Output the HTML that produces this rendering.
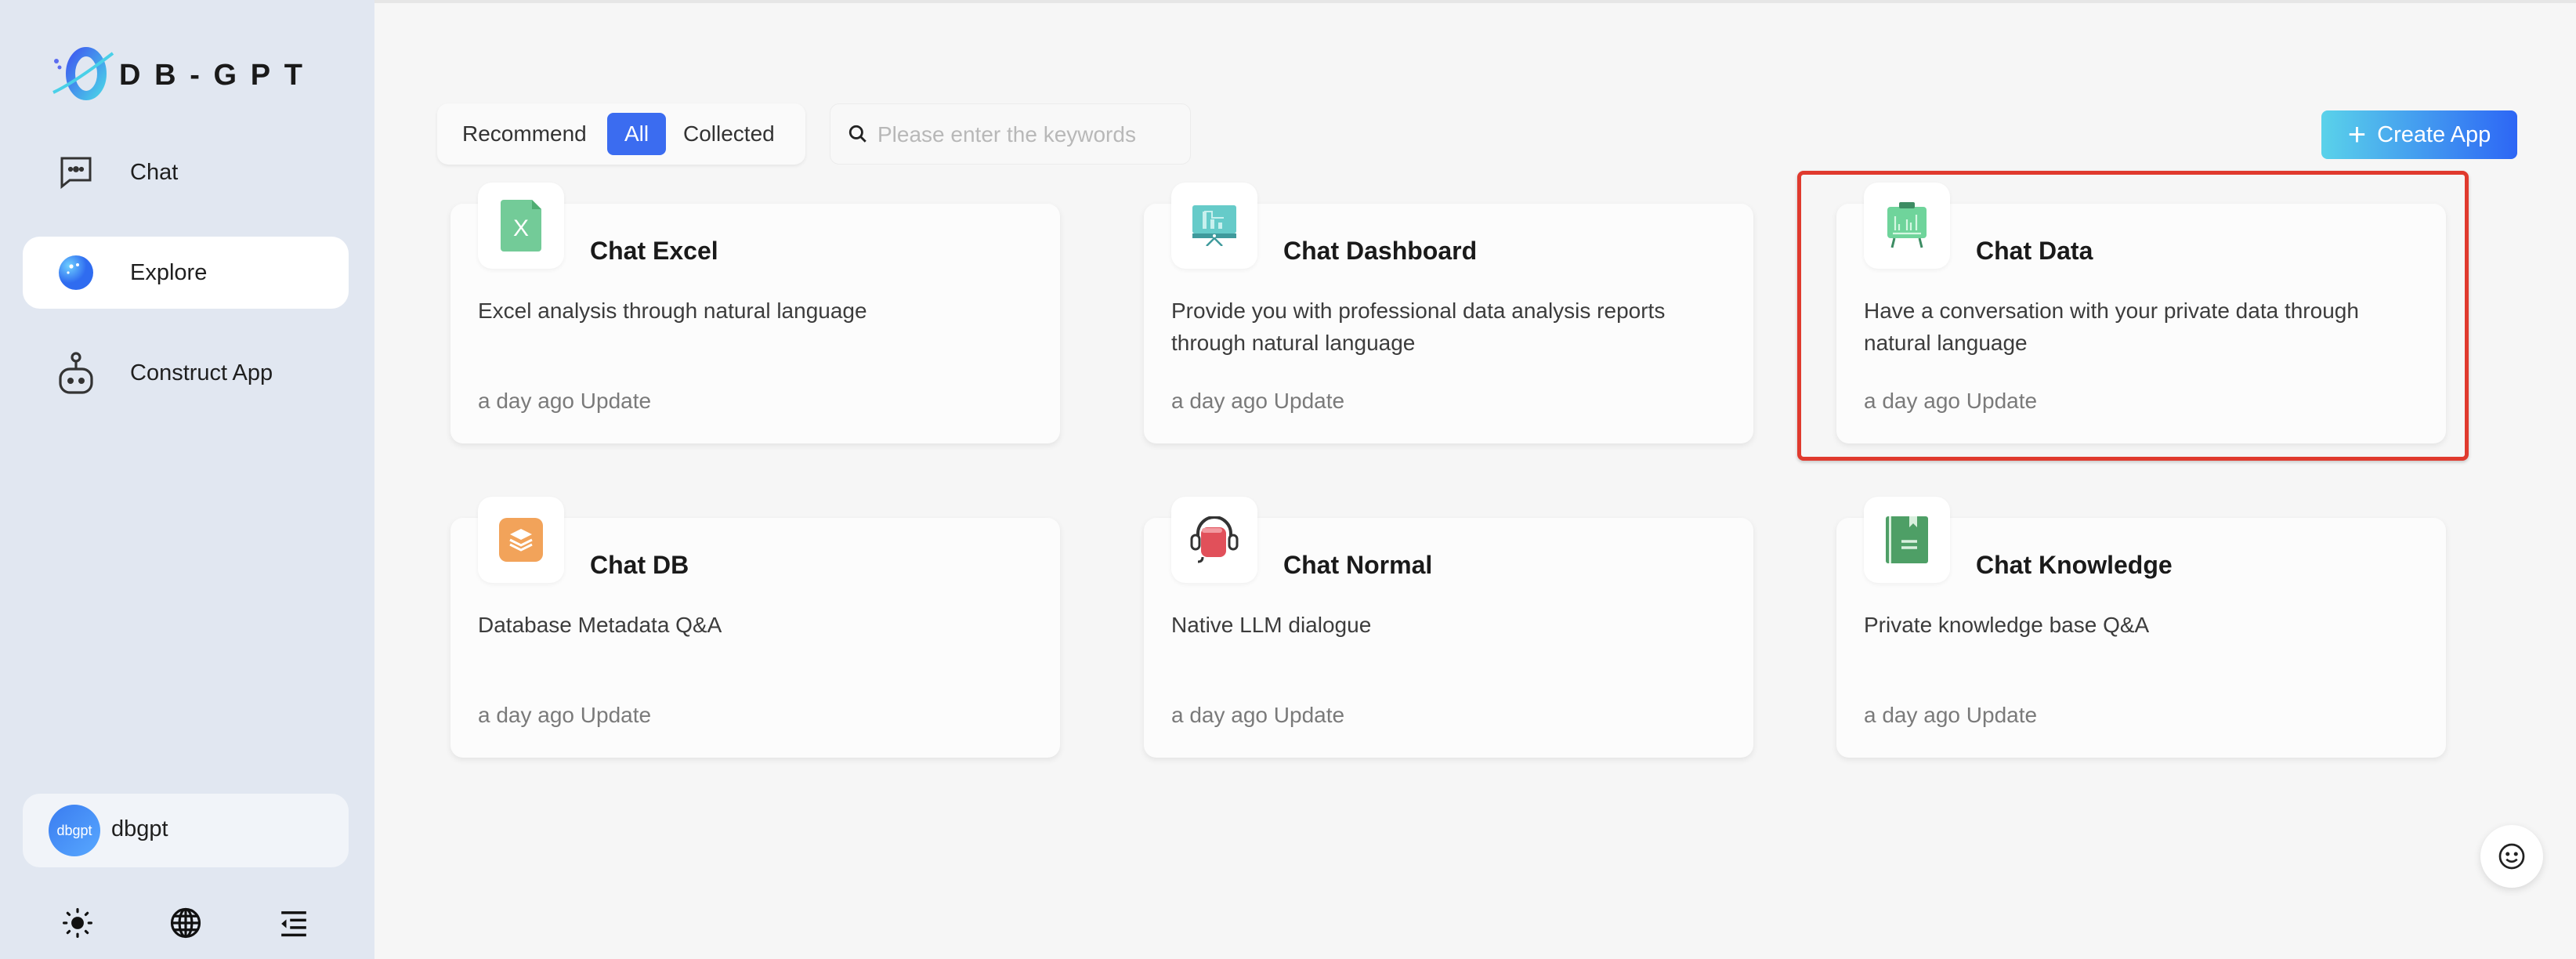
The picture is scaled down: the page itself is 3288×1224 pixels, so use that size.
<!DOCTYPE html>
<html><head><meta charset="utf-8"><style>
*{box-sizing:border-box;margin:0;padding:0}
body{width:3288px;height:1224px;background:#f6f6f6;font-family:"Liberation Sans",sans-serif;position:relative;overflow:hidden;color:#1f1f1f}
.abs{position:absolute}
.side{left:0;top:0;width:478px;height:1224px;background:#e1e7f1}
.topline{left:478px;top:0;width:2810px;height:4px;background:#e6e6e6}
.nav{position:absolute;left:29px;width:416px;height:92px;border-radius:22px;display:flex;align-items:center;font-size:29px;color:#1f1f1f}
.nav svg{margin-left:44px;margin-right:45px}
.card{position:absolute;width:778px;height:306px;background:#fcfcfc;border-radius:16px;box-shadow:0 3px 8px rgba(0,0,0,.08)}
.ib{position:absolute;left:35px;top:-27px;width:110px;height:110px;background:#fff;border-radius:18px;box-shadow:0 2px 6px rgba(0,0,0,.05);display:flex;align-items:center;justify-content:center}
.tt{position:absolute;left:178px;top:42px;font-size:32px;font-weight:bold;color:#1a1a1a}
.ds{position:absolute;left:35px;top:116px;font-size:28px;line-height:41px;color:#3c3c3c;width:700px}
.ft{position:absolute;left:35px;top:236px;font-size:28px;color:#7a7a7a}
</style></head><body>
<div class="abs side"></div>
<div class="abs topline"></div>
<!-- logo -->
<svg class="abs" style="left:64px;top:56px" width="340" height="76" viewBox="0 0 340 76">
<defs><linearGradient id="lg" x1="0" y1="0" x2="1" y2="1"><stop offset="0" stop-color="#3f5cf0"/><stop offset="1" stop-color="#4ad0e8"/></linearGradient></defs>
<ellipse cx="46" cy="38" rx="20" ry="28" fill="none" stroke="url(#lg)" stroke-width="12"/>
<path d="M4 62 Q30 50 80 12" stroke="#4ad0e8" stroke-width="4" fill="none"/>
<circle cx="8" cy="22" r="3" fill="#5b6cf0"/><circle cx="12" cy="30" r="2.5" fill="#5b6cf0"/>
<text x="88" y="52" font-family="Liberation Sans,sans-serif" font-weight="bold" font-size="38" letter-spacing="6" textLength="240" fill="#1a1a1a">DB-GPT</text>
</svg>
<div class="nav" style="top:174px"><svg width="48" height="48" viewBox="0 0 24 24" fill="none" stroke="#333" stroke-width="1.5"><path d="M3 3h18v14H8l-5 4z"/><circle cx="12" cy="10" r="1.2" fill="#333"/><circle cx="8.5" cy="10" r=".8" fill="#333"/><circle cx="15.5" cy="10" r=".8" fill="#333"/></svg>Chat</div>
<div class="nav" style="top:302px;background:#fff"><svg width="48" height="48" viewBox="0 0 24 24"><defs><radialGradient id="rg" cx=".3" cy=".3"><stop offset="0" stop-color="#6fd0ff"/><stop offset="1" stop-color="#2f6cf0"/></radialGradient></defs><circle cx="12" cy="12" r="11" fill="url(#rg)"/><circle cx="9" cy="8" r="1.3" fill="#fff"/><circle cx="13" cy="7" r="1" fill="#fff"/><circle cx="7" cy="12" r=".8" fill="#fff"/></svg>Explore</div>
<div class="nav" style="top:430px"><svg width="48" height="56" viewBox="0 0 24 28" fill="none" stroke="#333" stroke-width="1.6"><circle cx="12" cy="4" r="2.5"/><path d="M12 6.5v5"/><rect x="2" y="11.5" width="20" height="15" rx="6"/><circle cx="8.5" cy="19" r="1.2" fill="#333"/><circle cx="15.5" cy="19" r="1.2" fill="#333"/></svg>Construct App</div>
<!-- user -->
<div class="abs" style="left:29px;top:1013px;width:416px;height:94px;background:#f1f4f9;border-radius:22px"></div>
<div class="abs" style="left:62px;top:1027px;width:66px;height:66px;border-radius:50%;background:linear-gradient(135deg,#3a7cf0,#58a8ff);color:#fff;font-size:18px;display:flex;align-items:center;justify-content:center">dbgpt</div>
<div class="abs" style="left:142px;top:1042px;font-size:29px">dbgpt</div>
<svg class="abs" style="left:80px;top:1159px" width="38" height="38" viewBox="0 0 24 24"><circle cx="12" cy="12" r="5" fill="#111"/><g stroke="#111" stroke-width="2" stroke-linecap="round"><path d="M12 1v2M12 21v2M1 12h2M21 12h2M4 4l1.4 1.4M18.6 18.6L20 20M4 20l1.4-1.4M18.6 5.4L20 4"/></g></svg>
<svg class="abs" style="left:216px;top:1157px" width="42" height="42" viewBox="0 0 24 24" fill="none" stroke="#111" stroke-width="1.8"><circle cx="12" cy="12" r="10"/><ellipse cx="12" cy="12" rx="4.5" ry="10"/><path d="M2 12h20M3.5 7h17M3.5 17h17M12 2v20"/></svg>
<svg class="abs" style="left:356px;top:1160px" width="38" height="38" viewBox="0 0 24 24" fill="#111"><rect x="2" y="2" width="20" height="2.2"/><rect x="9" y="8" width="13" height="2.2"/><rect x="9" y="14" width="13" height="2.2"/><rect x="2" y="20" width="20" height="2.2"/><path d="M2 12l4-3.5v7z"/></svg>
<!-- tabs -->
<div class="abs" style="left:558px;top:132px;width:470px;height:78px;background:#fafafa;border-radius:14px;box-shadow:0 2px 5px rgba(0,0,0,.07)"></div>
<div class="abs" style="left:590px;top:155px;font-size:28px;color:#333">Recommend</div>
<div class="abs" style="left:775px;top:144px;width:75px;height:54px;background:#3b6cf0;border-radius:8px;color:#fff;font-size:28px;display:flex;align-items:center;justify-content:center">All</div>
<div class="abs" style="left:872px;top:155px;font-size:28px;color:#333">Collected</div>
<div class="abs" style="left:1059px;top:132px;width:461px;height:78px;background:#f8f8f8;border-radius:12px;border:1px solid #ececec"></div>
<svg class="abs" style="left:1082px;top:158px" width="26" height="26" viewBox="0 0 24 24" fill="none" stroke="#222" stroke-width="2.6"><circle cx="10" cy="10" r="7"/><path d="M15 15l6 6"/></svg>
<div class="abs" style="left:1120px;top:156px;font-size:28px;color:#b8b8b8">Please enter the keywords</div>
<div class="abs" style="left:2963px;top:141px;width:250px;height:62px;border-radius:8px;background:linear-gradient(90deg,#5ad2ea,#2d66f5);color:#fff;font-size:29px;display:flex;align-items:center;justify-content:center"><span style="font-size:40px;font-weight:300;margin-right:14px;line-height:1">+</span>Create App</div>
<!-- red box -->
<div class="abs" style="left:2294px;top:218px;width:857px;height:370px;border:5px solid #e03a2e;border-radius:8px;box-shadow:0 2px 4px rgba(0,0,0,.2)"></div>
<!-- cards -->
<div class="card" style="left:575px;top:260px"><div class="ib"><svg width="52" height="66" viewBox="0 0 52 66"><path d="M4 0h36l12 12v50a4 4 0 0 1-4 4H4a4 4 0 0 1-4-4V4a4 4 0 0 1 4-4z" fill="#73cb98"/><path d="M40 0l12 12H40z" fill="#4fae72"/><text x="26" y="46" text-anchor="middle" font-size="30" fill="#fff" font-family="Liberation Sans">X</text></svg></div><div class="tt">Chat Excel</div><div class="ds">Excel analysis through natural language</div><div class="ft">a day ago Update</div></div>
<div class="card" style="left:1460px;top:260px"><div class="ib"><svg width="56" height="52" viewBox="0 0 56 52"><rect x="0" y="0" width="56" height="36" rx="3" fill="#66cbc9"/><rect x="0" y="36" width="56" height="6" fill="#3f9a9c"/><rect x="13" y="8" width="5" height="22" fill="#c8f0ee"/><rect x="23" y="18" width="5" height="12" fill="#c8f0ee"/><rect x="33" y="22" width="5" height="8" fill="#c8f0ee"/><path d="M15 8h10v8h15" stroke="#c8f0ee" stroke-width="2" fill="none"/><path d="M28 42l-10 10M28 42l10 10" stroke="#3f9a9c" stroke-width="2.5"/><circle cx="28" cy="39" r="2" fill="#fff"/></svg></div><div class="tt">Chat Dashboard</div><div class="ds">Provide you with professional data analysis reports through natural language</div><div class="ft">a day ago Update</div></div>
<div class="card" style="left:2344px;top:260px"><div class="ib"><svg width="56" height="60" viewBox="0 0 56 60"><rect x="3" y="6" width="50" height="40" rx="4" fill="#6fd49b"/><rect x="18" y="0" width="20" height="8" rx="2" fill="#3d8c63"/><path d="M13 18v18M18 28v8M28 22v14M33 26v10M40 16v20M10 40h36" stroke="#d5f7e2" stroke-width="2.2"/><path d="M12 46l-3 12M44 46l3 12" stroke="#3d8c63" stroke-width="3"/></svg></div><div class="tt">Chat Data</div><div class="ds">Have a conversation with your private data through natural language</div><div class="ft">a day ago Update</div></div>
<div class="card" style="left:575px;top:661px"><div class="ib"><svg width="56" height="56" viewBox="0 0 56 56"><rect x="0" y="0" width="56" height="56" rx="10" fill="#f2a35a"/><path d="M28 14l14 7-14 7-14-7z" fill="#fff"/><path d="M14 28l14 7 14-7M14 34l14 7 14-7" stroke="#fff" stroke-width="3" fill="none"/></svg></div><div class="tt">Chat DB</div><div class="ds">Database Metadata Q&amp;A</div><div class="ft">a day ago Update</div></div>
<div class="card" style="left:1460px;top:661px"><div class="ib"><svg width="66" height="60" viewBox="0 0 66 60"><path d="M12 30V22a21 21 0 0 1 42 0v8" stroke="#333" stroke-width="4" fill="none"/><rect x="4" y="24" width="10" height="18" rx="5" stroke="#333" stroke-width="3" fill="#fff"/><rect x="52" y="24" width="10" height="18" rx="5" stroke="#333" stroke-width="3" fill="#fff"/><rect x="16" y="14" width="32" height="38" rx="8" fill="#e1505a"/><path d="M20 18h20" stroke="#f29aa0" stroke-width="6" stroke-linecap="round"/><path d="M18 52q0 6 -6 6" stroke="#333" stroke-width="3" fill="none"/></svg></div><div class="tt">Chat Normal</div><div class="ds">Native LLM dialogue</div><div class="ft">a day ago Update</div></div>
<div class="card" style="left:2344px;top:661px"><div class="ib"><svg width="54" height="60" viewBox="0 0 54 60"><rect x="0" y="0" width="54" height="60" rx="3" fill="#4e9f66"/><rect x="4" y="0" width="3" height="60" fill="#d9f0de"/><path d="M30 0v14l5-5 5 5V0" fill="#d9f0de"/><path d="M20 32h20M20 40h20" stroke="#d9f0de" stroke-width="3.5"/></svg></div><div class="tt">Chat Knowledge</div><div class="ds">Private knowledge base Q&amp;A</div><div class="ft">a day ago Update</div></div>
<!-- float button -->
<div class="abs" style="left:3166px;top:1053px;width:80px;height:80px;border-radius:50%;background:#fff;box-shadow:0 3px 10px rgba(0,0,0,.12);display:flex;align-items:center;justify-content:center"><svg width="36" height="36" viewBox="0 0 24 24" fill="none" stroke="#222" stroke-width="1.8"><circle cx="12" cy="12" r="10"/><circle cx="8.5" cy="10" r=".8" fill="#222"/><circle cx="15.5" cy="10" r=".8" fill="#222"/><path d="M7.5 14.5q4.5 4 9 0"/></svg></div>
</body></html>
